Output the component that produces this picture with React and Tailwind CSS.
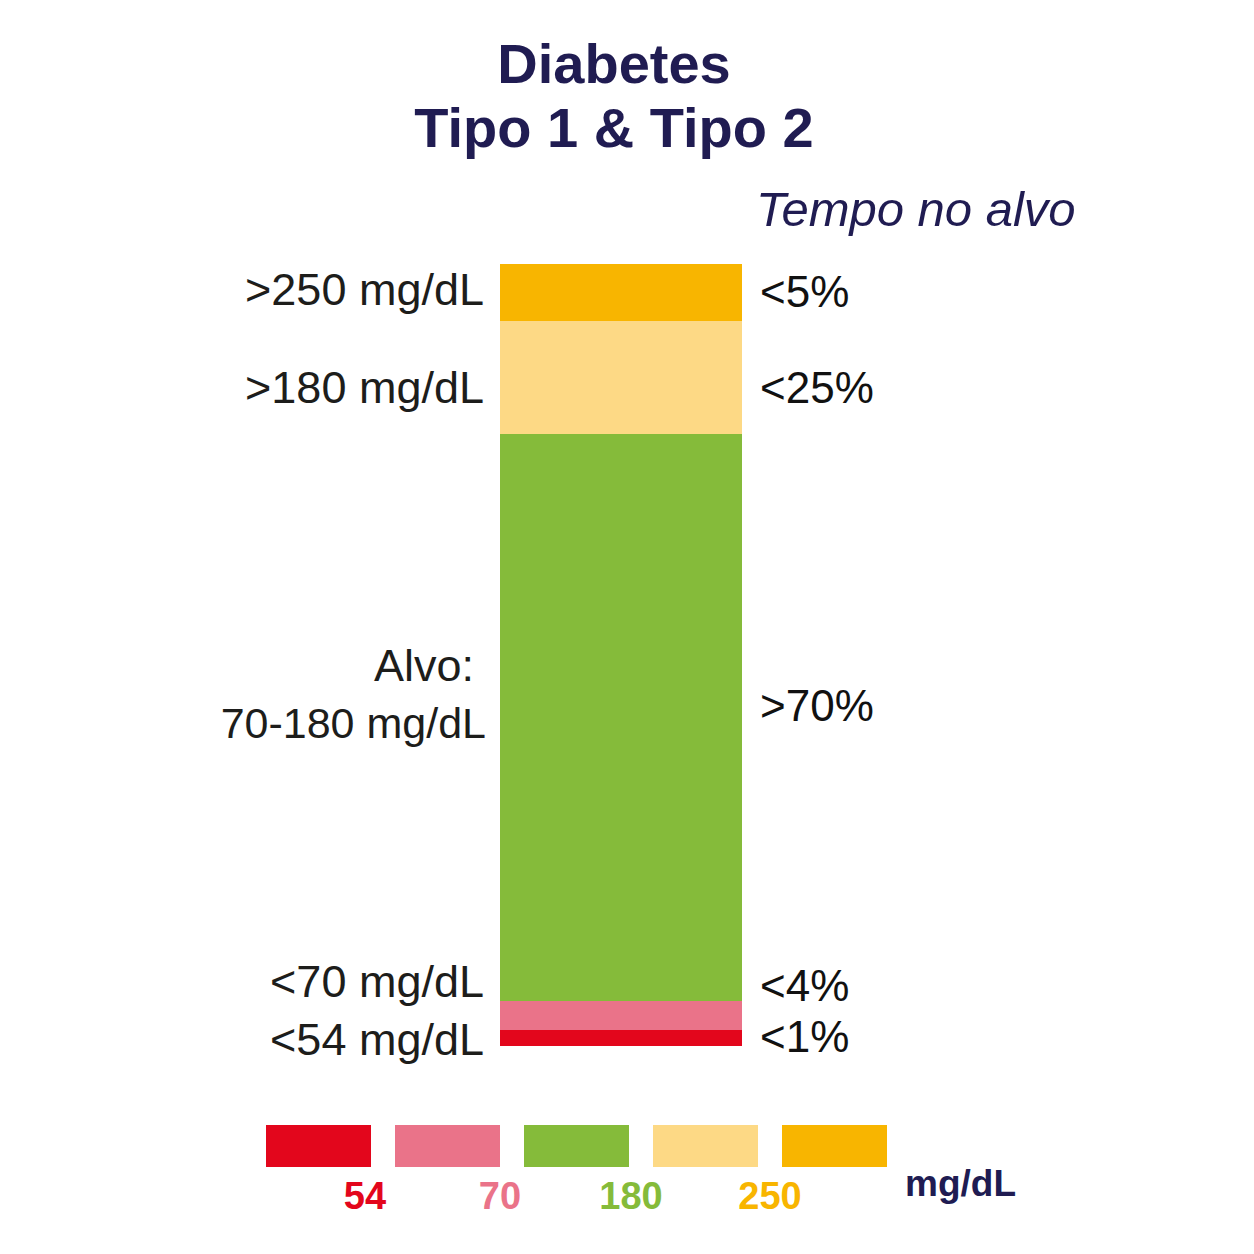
import React from "react";

const navy = "text-[#201c52]";

const segments = [
  { h: "h-[57px]", bg: "bg-[#f8b500]" },
  { h: "h-[113px]", bg: "bg-[#fdd985]" },
  { h: "h-[567px]", bg: "bg-[#85bb3a]" },
  { h: "h-[29px]", bg: "bg-[#ea7389]" },
  { h: "h-[16px]", bg: "bg-[#e3061c]" },
];

const legend = [
  { bg: "bg-[#e3061c]", num: "54", color: "text-[#e3061c]", shift: "mr-[6px]" },
  { bg: "bg-[#ea7389]", num: "70", color: "text-[#ea7389]", shift: "" },
  { bg: "bg-[#85bb3a]", num: "180", color: "text-[#85bb3a]", shift: "mr-[-2px]" },
  { bg: "bg-[#fdd985]", num: "250", color: "text-[#f8b500]", shift: "mr-[-12px]" },
  { bg: "bg-[#f8b500]", num: null },
];

export default function App() {
  return (
    <div className="w-[1254px] h-[1254px] bg-white overflow-hidden font-['Liberation_Sans',Arial,sans-serif]">
      {/* title */}
      <div className={`pt-[32px] pr-[26px] text-center text-[56px] font-bold leading-[64px] ${navy}`}>
        <div>Diabetes</div>
        <div>Tipo 1 &amp; Tipo 2</div>
      </div>

      <div className={`mt-[21px] pl-[756px] text-[49px] italic leading-[56px] ${navy}`}>
        Tempo no alvo
      </div>

      {/* bar with labels */}
      <div className="mt-[27px] flex items-start">
        <div className="flex h-[782px] w-[484px] flex-col items-end text-[45px] leading-[44px] text-[#1d1d1b]">
          <div className="mt-[4px]">&gt;250 mg/dL</div>
          <div className="mt-[54px]">&gt;180 mg/dL</div>
          <div className="mt-[234px] pr-[10px]">Alvo:</div>
          <div className="mt-[13px] mr-[-2px] text-[43px]">70-180 mg/dL</div>
          <div className="mt-[215px]">&lt;70 mg/dL</div>
          <div className="mt-[14px]">&lt;54 mg/dL</div>
        </div>

        <div className="ml-[16px] flex w-[242px] flex-col">
          {segments.map((s, i) => (
            <div key={i} className={`${s.h} ${s.bg}`} />
          ))}
        </div>

        <div className="ml-[18px] flex h-[782px] flex-col text-[44px] leading-[44px] text-[#111111]">
          <div className="mt-[6px]">&lt;5%</div>
          <div className="mt-[52px]">&lt;25%</div>
          <div className="mt-[274px]">&gt;70%</div>
          <div className="mt-[236px]">&lt;4%</div>
          <div className="mt-[7px]">&lt;1%</div>
        </div>
      </div>

      {/* legend */}
      <div className="mt-[79px] flex pl-[266px]">
        <div className="flex gap-[24px]">
          {legend.map((l, i) => (
            <div key={i} className="flex w-[105px] flex-col">
              <div className={`h-[42px] ${l.bg}`} />
              <div className="mt-[9px] flex h-[40px] justify-end">
                {l.num && (
                  <span className={`translate-x-1/2 text-[38px] font-bold leading-[40px] ${l.color} ${l.shift}`}>
                    {l.num}
                  </span>
                )}
              </div>
            </div>
          ))}
        </div>
        <div className={`ml-[18px] mb-[12px] self-end text-[37px] font-bold leading-[40px] ${navy}`}>
          mg/dL
        </div>
      </div>
    </div>
  );
}
